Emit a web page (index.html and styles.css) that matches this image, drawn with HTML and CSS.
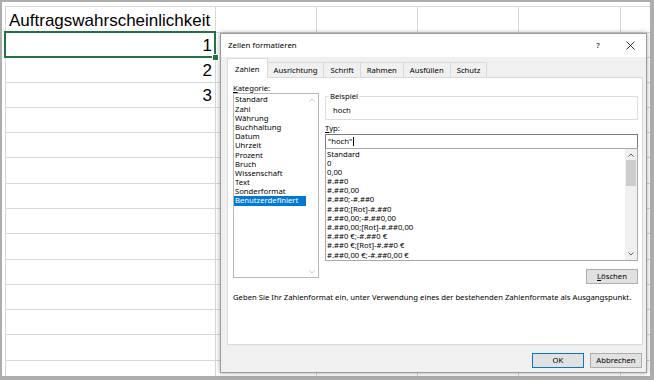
FILE: index.html
```html
<!DOCTYPE html>
<html lang="de">
<head>
<meta charset="utf-8">
<title>Zellen formatieren</title>
<link rel="stylesheet" href="styles.css">
</head>
<body>
<div class="frame">
  <div class="sheet">
    <div class="grid">
      <div class="cell txt">Auftragswahrscheinlichkeit</div><div class="cell"></div><div class="cell"></div><div class="cell"></div><div class="cell"></div><div class="cell"></div>
      <div class="cell num sel">1</div><div class="cell"></div><div class="cell"></div><div class="cell"></div><div class="cell"></div><div class="cell"></div>
      <div class="cell num">2</div><div class="cell"></div><div class="cell"></div><div class="cell"></div><div class="cell"></div><div class="cell"></div>
      <div class="cell num">3</div><div class="cell"></div><div class="cell"></div><div class="cell"></div><div class="cell"></div><div class="cell"></div>
      <div class="cell"></div><div class="cell"></div><div class="cell"></div><div class="cell"></div><div class="cell"></div><div class="cell"></div>
      <div class="cell"></div><div class="cell"></div><div class="cell"></div><div class="cell"></div><div class="cell"></div><div class="cell"></div>
      <div class="cell"></div><div class="cell"></div><div class="cell"></div><div class="cell"></div><div class="cell"></div><div class="cell"></div>
      <div class="cell"></div><div class="cell"></div><div class="cell"></div><div class="cell"></div><div class="cell"></div><div class="cell"></div>
      <div class="cell"></div><div class="cell"></div><div class="cell"></div><div class="cell"></div><div class="cell"></div><div class="cell"></div>
      <div class="cell"></div><div class="cell"></div><div class="cell"></div><div class="cell"></div><div class="cell"></div><div class="cell"></div>
      <div class="cell"></div><div class="cell"></div><div class="cell"></div><div class="cell"></div><div class="cell"></div><div class="cell"></div>
      <div class="cell"></div><div class="cell"></div><div class="cell"></div><div class="cell"></div><div class="cell"></div><div class="cell"></div>
      <div class="cell"></div><div class="cell"></div><div class="cell"></div><div class="cell"></div><div class="cell"></div><div class="cell"></div>
      <div class="cell"></div><div class="cell"></div><div class="cell"></div><div class="cell"></div><div class="cell"></div><div class="cell"></div>
      <div class="cell"></div><div class="cell"></div><div class="cell"></div><div class="cell"></div><div class="cell"></div><div class="cell"></div>
    </div>
  </div>

  <div class="dialog">
    <div class="titlebar">
      <span class="title">Zellen formatieren</span>
      <span class="help">?</span>
      <span class="close"><svg width="9" height="9" viewBox="0 0 9 9"><path d="M0.5 0.5 L8.5 8.5 M8.5 0.5 L0.5 8.5" stroke="#1a1a1a" stroke-width="0.9" fill="none"/></svg></span>
    </div>
    <div class="body">
      <div class="tabs">
        <div class="tab active">Zahlen</div>
        <div class="tab">Ausrichtung</div>
        <div class="tab">Schrift</div>
        <div class="tab">Rahmen</div>
        <div class="tab">Ausfüllen</div>
        <div class="tab">Schutz</div>
      </div>
      <div class="panel">
        <div class="cols">
          <div class="left">
            <div class="lbl"><u>K</u>ategorie:</div>
            <div class="listbox">
              <div class="items">
                <div class="item">Standard</div>
                <div class="item">Zahl</div>
                <div class="item">Währung</div>
                <div class="item">Buchhaltung</div>
                <div class="item">Datum</div>
                <div class="item">Uhrzeit</div>
                <div class="item">Prozent</div>
                <div class="item">Bruch</div>
                <div class="item">Wissenschaft</div>
                <div class="item">Text</div>
                <div class="item">Sonderformat</div>
                <div class="item selected">Benutzerdefiniert</div>
              </div>
              <div class="vscroll disabled">
                <svg class="arrow" width="6" height="4" viewBox="0 0 6 4"><path d="M0.5 3.5 L3 1 L5.5 3.5" stroke="#c2c2c2" stroke-width="0.9" fill="none"/></svg>
                <svg class="arrow" width="6" height="4" viewBox="0 0 6 4"><path d="M0.5 0.5 L3 3 L5.5 0.5" stroke="#c2c2c2" stroke-width="0.9" fill="none"/></svg>
              </div>
            </div>
          </div>
          <div class="right">
            <fieldset class="group">
              <legend>Beispiel</legend>
              <div class="sample">hoch</div>
            </fieldset>
            <div class="lbl typ"><u>T</u>yp:</div>
            <div class="input">"hoch"<span class="caret"></span></div>
            <div class="formats">
              <div class="items">
                <div class="item">Standard</div>
                <div class="item">0</div>
                <div class="item">0,00</div>
                <div class="item">#.##0</div>
                <div class="item">#.##0,00</div>
                <div class="item">#.##0;-#.##0</div>
                <div class="item">#.##0;[Rot]-#.##0</div>
                <div class="item">#.##0,00;-#.##0,00</div>
                <div class="item">#.##0,00;[Rot]-#.##0,00</div>
                <div class="item">#.##0 €;-#.##0 €</div>
                <div class="item">#.##0 €;[Rot]-#.##0 €</div>
                <div class="item">#.##0,00 €;-#.##0,00 €</div>
              </div>
              <div class="vscroll">
                <svg class="arrow" width="6" height="4" viewBox="0 0 6 4"><path d="M0.5 3.5 L3 1 L5.5 3.5" stroke="#555" stroke-width="0.9" fill="none"/></svg>
                <div class="track"><div class="thumb"></div></div>
                <svg class="arrow" width="6" height="4" viewBox="0 0 6 4"><path d="M0.5 0.5 L3 3 L5.5 0.5" stroke="#555" stroke-width="0.9" fill="none"/></svg>
              </div>
            </div>
            <div class="btnrow"><button class="btn"><u>L</u>öschen</button></div>
          </div>
        </div>
        <p class="hint">Geben Sie Ihr Zahlenformat ein, unter Verwendung eines der bestehenden Zahlenformate als Ausgangspunkt.</p>
      </div>
      <div class="footer">
        <button class="btn default">OK</button>
        <button class="btn">Abbrechen</button>
      </div>
    </div>
  </div>
</div>
</body>
</html>
```

FILE: styles.css
```css
* { box-sizing: border-box; }

body {
  margin: 0;
  background: #adadad;
}

.frame {
  position: relative;
  width: 654px;
  height: 380px;
  padding: 2px 4px 4px 2px;
  background: #adadad;
  overflow: hidden;
}

.sheet {
  width: 100%;
  height: 100%;
  background: #fff;
  padding: 4px 0 0 3px;
  overflow: hidden;
}

.grid {
  display: grid;
  grid-template-columns: 210px 101px 101px 101px 102px 40px;
  grid-template-rows: 26px 25px 25px 25px 25px 25px 26px 25px 25px 26px 25px 25px 25px 26px 25px;
  border-top: 1px solid #d8d8d8;
  border-left: 1px solid #d8d8d8;
}

.cell {
  border-right: 1px solid #d8d8d8;
  border-bottom: 1px solid #d8d8d8;
  display: flex;
  align-items: flex-end;
  padding: 0 3px 3px 3px;
  font-family: "Liberation Sans", Arial, sans-serif;
  font-size: 17px;
  line-height: 17px;
  color: #000;
  white-space: nowrap;
}

.num { justify-content: flex-end; }

.sel { position: relative; }
.sel::after {
  content: "";
  position: absolute;
  left: -2px;
  top: -2px;
  right: -1px;
  bottom: -1px;
  border: 2px solid #217346;
}
.sel::before {
  content: "";
  position: absolute;
  right: -4px;
  bottom: -4px;
  width: 5px;
  height: 5px;
  background: #217346;
  border: 1px solid #fff;
  z-index: 1;
}

/* dialog */
.dialog {
  position: absolute;
  left: 220px;
  top: 33px;
  width: 427px;
  height: 340px;
  background: #f0f0f0;
  border: 1px solid #9c9c9c;
  box-shadow: 0 0 5px rgba(0, 0, 0, 0.35);
  display: flex;
  flex-direction: column;
  font-family: "Noto Sans", "Open Sans", sans-serif;
  font-size: 7.7px;
  line-height: 9px;
  color: #000;
}

.titlebar {
  height: 23px;
  background: #fff;
  display: flex;
  align-items: center;
  padding-left: 7px;
}
.title { flex: 1; font-size: 7.9px; }
.help { width: 6px; text-align: center; margin-right: 25px; font-size: 7.9px; }
.close { width: 9px; height: 9px; margin-right: 11px; display: flex; }

.body {
  flex: 1;
  display: flex;
  flex-direction: column;
  padding: 0 3px 0 6px;
}

.tabs {
  display: flex;
  align-items: flex-end;
  height: 20px;
}
.tab {
  height: 15px;
  padding: 0 6px;
  border: 1px solid #d9d9d9;
  border-bottom: 0;
  margin-right: -1px;
  display: flex;
  align-items: center;
  background: #f0f0f0;
}
.tab.active {
  height: 20px;
  margin-bottom: -1px;
  background: #fff;
  position: relative;
  z-index: 1;
  padding-top: 2px;
  padding-left: 7px;
  padding-right: 7px;
}

.panel {
  height: 268px;
  background: #fff;
  border: 1px solid #d9d9d9;
  padding: 6px 4px 0 5px;
}

.cols {
  display: grid;
  grid-template-columns: 86px 313px;
  column-gap: 6px;
}

.lbl { height: 9px; }

.listbox {
  height: 185px;
  border: 1px solid #b9b9b9;
  display: flex;
}
.listbox .items { flex: 1; padding-top: 1.4px; }
.items .item {
  line-height: 9.2px;
  height: 9.2px;
  padding-left: 1px;
  white-space: nowrap;
}
.item.selected { background: #0078d7; color: #fff; }

.vscroll {
  width: 12px;
  display: flex;
  flex-direction: column;
  align-items: center;
  justify-content: space-between;
  padding: 4px 0 3px;
}
.arrow { display: block; }

.right { padding-top: 8px; }

.group {
  margin: 0;
  padding: 0 6px 2px;
  border: 1px solid #dcdcdc;
  min-width: 0;
}
.group legend {
  padding: 0 1px;
  margin-left: -3px;
  line-height: 9px;
}
.sample { padding: 5px 0 2px 1px; }

.typ { margin-top: 4px; margin-bottom: 1px; }

.input {
  height: 15px;
  border: 1px solid #7a7a7a;
  padding-left: 2px;
  line-height: 13px;
  display: flex;
  align-items: center;
}
.caret {
  display: inline-block;
  width: 1px;
  height: 9px;
  background: #000;
  margin-left: 0.5px;
}

.formats {
  margin-top: -1px;
  height: 113px;
  border: 1px solid #a9a9a9;
  display: flex;
}
.formats .items { flex: 1; padding-top: 0.5px; }
.formats .vscroll {
  background: #f0f0f0;
  width: 12px;
  padding: 4px 0 4px;
}
.track {
  flex: 1;
  width: 100%;
  padding: 3px 0;
}
.thumb {
  height: 26px;
  margin: 0 1px;
  background: #cdcdcd;
}

.btnrow {
  display: flex;
  justify-content: flex-end;
  margin-top: 8px;
}

.btn {
  font: inherit;
  color: #000;
  width: 52px;
  height: 15px;
  padding: 0;
  background: #e1e1e1;
  border: 1px solid #adadad;
  line-height: 13px;
}
.btn.default { border-color: #0078d7; }

.hint {
  margin: 9px 0 0 0;
  white-space: nowrap;
}

.footer {
  display: flex;
  justify-content: flex-end;
  gap: 6px;
  padding: 8px 1px 0 0;
}
```
